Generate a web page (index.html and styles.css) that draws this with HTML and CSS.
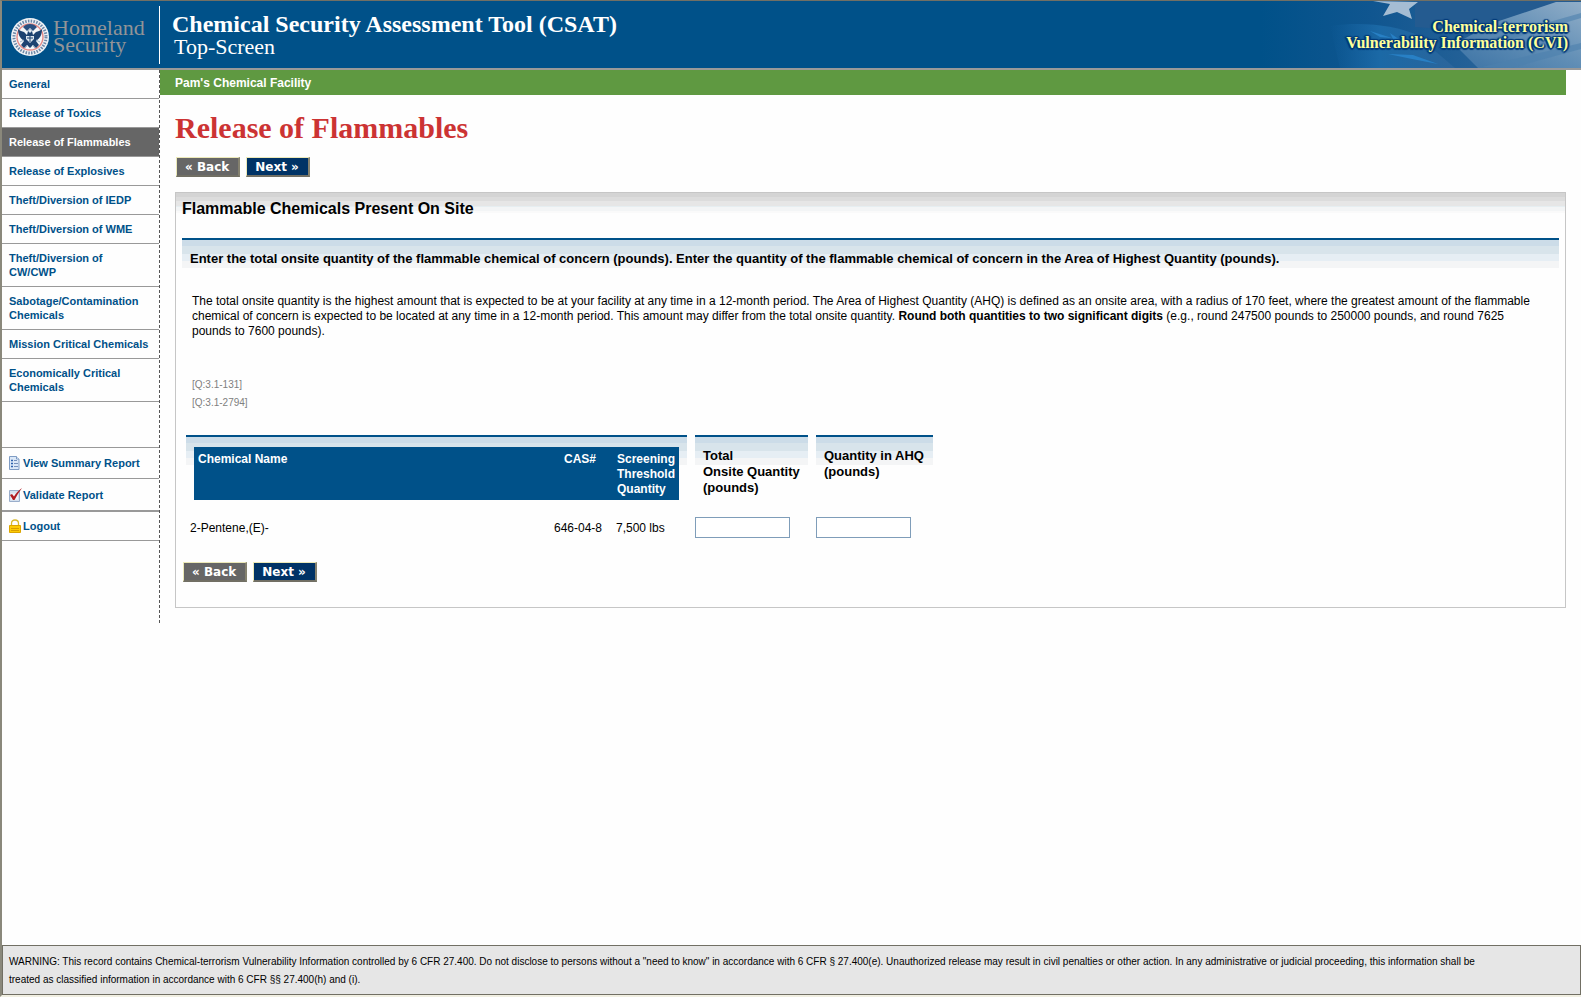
FILE: index.html
```html
<!DOCTYPE html>
<html lang="en">
<head>
<meta charset="utf-8">
<title>CSAT Top-Screen - Release of Flammables</title>
<link rel="stylesheet" href="styles.css">
</head>
<body>
<header class="banner">
  <div class="brand">
    <svg class="seal" viewBox="0 0 38 38" aria-hidden="true">
      <circle cx="19" cy="19" r="19" fill="#eef1f5"/>
      <circle cx="19" cy="19" r="16" fill="none" stroke="#6d88a8" stroke-width="3" stroke-dasharray="1.5 1.3"/>
      <circle cx="19" cy="19" r="13" fill="#f4f6f8" stroke="#e58a86" stroke-width="1.4"/>
      <path d="M7 11c2 2 4 2 6 3l3 3 1-4 2-2 2 2 1 4 3-3c2-1 4-1 6-3 0 6-2 9-6 12l3 4-3 3-3-3-3 3-3-3-3 3-3-3 3-4c-4-3-6-6-6-12z" fill="#1d4270"/>
      <path d="M12 9c2-2 4-3 7-3s5 1 7 3l-4 4-3-3-3 3z" fill="#2a5080"/>
      <path d="M19 11l-2 2 2 2 2-2zM15 18h8v3l-4 4-4-4z" fill="#dfe7ef"/>
      <path d="M16 20h6M19 18v6" stroke="#1d4270" stroke-width="1"/>
      <path d="M9 24l4-2M29 24l-4-2M14 30l3-3M24 30l-3-3" stroke="#9fb6cc" stroke-width="1"/>
    </svg>
    <div class="brand-name">Homeland<br>Security</div>
  </div>
  <div class="app-title">
    <div class="app-name">Chemical Security Assessment Tool (CSAT)</div>
    <div class="app-module">Top-Screen</div>
  </div>
  <div class="cvi">
    <svg class="flag" viewBox="0 0 321 67" preserveAspectRatio="none" aria-hidden="true">
      <defs>
        <linearGradient id="base" x1="0" x2="1"><stop offset="0" stop-color="#005189"/><stop offset=".35" stop-color="#105690"/><stop offset="1" stop-color="#3a6d9f"/></linearGradient>
        <linearGradient id="fold" x1="0" x2="1"><stop offset="0" stop-color="#1565a5" stop-opacity="0"/><stop offset=".4" stop-color="#1b69a6"/><stop offset="1" stop-color="#2b659b"/></linearGradient>
        <linearGradient id="light" x1="0" x2="1" y1="1" y2="0"><stop offset="0" stop-color="#3c73a5"/><stop offset=".5" stop-color="#5f8db5"/><stop offset="1" stop-color="#91aec8"/></linearGradient>
      </defs>
      <rect width="321" height="67" fill="url(#base)"/>
      <path d="M70 25c35-5 65 0 85 8l40 34H80z" fill="url(#fold)"/>
      <path d="M155 0h166v3l-80 30-86-7z" fill="#245b90"/>
      <path d="M218 67l-24-24 42-22 60-20h25v66z" fill="url(#light)"/>
      <path d="M215 42l106-30v5l-104 31zM222 66l99-24v6l-70 19z" fill="#4d80ae" opacity=".6"/>
      <path d="M113 0l17 3-7 12 14-4 15 7-3-10 9-7z" fill="#a5bdd3"/>
      <path d="M128 53l25 1 25 9-26-5zM110 30l22 7-12-1zM130 32l20 14-16-6z" fill="#2880c5"/>
    </svg>
    <div class="cvi-text"><span>Chemical-terrorism</span><span>Vulnerability Information (CVI)</span></div>
  </div>
</header>

<div class="layout">
  <nav class="sidebar">
    <ul class="menu">
      <li><a href="#">General</a></li>
      <li><a href="#">Release of Toxics</a></li>
      <li><a href="#" class="current">Release of Flammables</a></li>
      <li><a href="#">Release of Explosives</a></li>
      <li><a href="#">Theft/Diversion of IEDP</a></li>
      <li><a href="#">Theft/Diversion of WME</a></li>
      <li><a href="#">Theft/Diversion of<br>CW/CWP</a></li>
      <li><a href="#">Sabotage/Contamination Chemicals</a></li>
      <li><a href="#">Mission Critical Chemicals</a></li>
      <li><a href="#">Economically Critical Chemicals</a></li>
    </ul>
    <ul class="menu tools">
      <li><a href="#"><svg class="icon" viewBox="0 0 13 14" aria-hidden="true"><path d="M.5 .5h7l2.500 2.500v10.500H.5z" fill="#dbe8f8" stroke="#7f9cc4"/><path d="M7.500 .5V3H10" fill="#fff" stroke="#7f9cc4"/><path d="M2 4.500h2M2 7.500h2M2 10.500h2" stroke="#2e62ad" stroke-width="1.500"/><path d="M5 4.500h3M5 7.500h4M5 10.500h4" stroke="#7590bb"/></svg>View Summary Report</a></li>
      <li class="double"><a href="#"><svg class="icon" viewBox="0 0 13 14" aria-hidden="true"><path d="M.5 2.500h10v11H.5z" fill="#d5e0ee" stroke="#9aaecb"/><path d="M2 5.500h7v6H2z" fill="#f1f5fa"/><path d="M1 7l2-1 2 2.500C7 5 10 2 13 0 10 4 7.500 8 5.500 12H4z" fill="#b01c22"/></svg>Validate Report</a></li>
      <li><a href="#"><svg class="icon" viewBox="0 0 13 14" aria-hidden="true"><path d="M2.500 7V4.500C2.500 2 4 1 6 1s3.500 1 3.500 3.500V7" fill="none" stroke="#d9b92c" stroke-width="1.300"/><path d="M.5 6.500h11v7H.5z" fill="#fccb05" stroke="#dba500"/><path d="M2 9.500h8M2 11.500h8" stroke="#d99d00"/></svg>Logout</a></li>
    </ul>
  </nav>

  <main class="main">
    <div class="facility">Pam's Chemical Facility</div>
    <div class="content">
      <h1>Release of Flammables</h1>
      <div class="actions">
        <button type="button" class="btn back">« Back</button>
        <button type="button" class="btn next">Next »</button>
      </div>
      <section class="panel">
        <h2>Flammable Chemicals Present On Site</h2>
        <h3 class="question">Enter the total onsite quantity of the flammable chemical of concern (pounds). Enter the quantity of the flammable chemical of concern in the Area of Highest Quantity (pounds).</h3>
        <p class="help">The total onsite quantity is the highest amount that is expected to be at your facility at any time in a 12-month period. The Area of Highest Quantity (AHQ) is defined as an onsite area, with a radius of 170 feet, where the greatest amount of the flammable chemical of concern is expected to be located at any time in a 12-month period. This amount may differ from the total onsite quantity. <strong>Round both quantities to two significant digits</strong> (e.g., round 247500 pounds to 250000 pounds, and round 7625 pounds to 7600 pounds).</p>
        <p class="refs">[Q:3.1-131]<br>[Q:3.1-2794]</p>
        <table class="chemicals">
          <colgroup><col class="c-name"><col class="c-cas"><col class="c-stq"><col class="c-total"><col class="c-ahq"></colgroup>
          <thead>
            <tr>
              <th scope="col"><div class="cap first"><div class="blue">Chemical Name</div></div></th>
              <th scope="col"><div class="cap"><div class="blue">CAS#</div></div></th>
              <th scope="col"><div class="cap last"><div class="blue">Screening Threshold Quantity</div></div></th>
              <th scope="col"><div class="cap own" id="h-total">Total<br>Onsite Quantity<br>(pounds)</div></th>
              <th scope="col"><div class="cap own" id="h-ahq">Quantity in AHQ<br>(pounds)</div></th>
            </tr>
          </thead>
          <tbody>
            <tr>
              <td>2-Pentene,(E)-</td>
              <td>646-04-8</td>
              <td>7,500 lbs</td>
              <td class="entry"><input type="text" aria-labelledby="h-total"></td>
              <td class="entry"><input type="text" aria-labelledby="h-ahq"></td>
            </tr>
          </tbody>
        </table>
        <div class="actions">
          <button type="button" class="btn back">« Back</button>
          <button type="button" class="btn next">Next »</button>
        </div>
      </section>
    </div>
  </main>
</div>

<footer class="warning">WARNING: This record contains Chemical-terrorism Vulnerability Information controlled by 6 CFR 27.400. Do not disclose to persons without a "need to know" in accordance with 6 CFR § 27.400(e). Unauthorized release may result in civil penalties or other action. In any administrative or judicial proceeding, this information shall be treated as classified information in accordance with 6 CFR §§ 27.400(h) and (i).</footer>
</body>
</html>
```
FILE: styles.css
```css
* { box-sizing: border-box; }

body {
  margin: 0;
  min-height: 100vh;
  display: flex;
  flex-direction: column;
  background: #fefefe;
  border-top: 1px solid #716f64;
  border-left: 2px solid #8a887b;
  border-bottom: 2px solid #f1efe2;
  color: #000;
  font: 12px/15px "Liberation Sans", Arial, sans-serif;
}

/* Banner */
.banner {
  display: flex;
  height: 69px;
  background: #005189;
  border-bottom: 2px solid #999;
  font-family: "Liberation Serif", Georgia, serif;
  color: #fff;
}
.brand {
  display: flex;
  gap: 4px;
  width: 158px;
  margin: 5px 0 4px;
  padding: 11px 0 0 9px;
  border-right: 1px solid #fff;
}
.seal { width: 38px; height: 38px; margin-top: 1px; }
.brand-name { color: #929497; font-size: 22px; line-height: 17px; padding-top: 2px; }
.app-title { padding: 12px 0 0 12px; white-space: nowrap; }
.app-name { font-size: 24px; line-height: 23px; font-weight: bold; }
.app-module { font-size: 22px; line-height: 21px; padding-left: 2px; }
.cvi { position: relative; width: 321px; margin-left: auto; }
.flag { position: absolute; inset: 0; width: 100%; height: 100%; }
.cvi-text {
  position: relative;
  display: flex;
  flex-direction: column;
  align-items: flex-end;
  padding: 18px 13px 0 0;
  color: #ffff99;
  font-size: 16px;
  line-height: 16px;
  font-weight: bold;
  white-space: nowrap;
  text-shadow: -1px -1px 1px #003a7a, 1px -1px 1px #003a7a, -1px 1px 1px #003a7a, 1px 1px 1px #003a7a, 0 2px 1px #003a7a, 2px 0 1px #003a7a, -2px 0 1px #003a7a;
}

/* Page columns */
.layout { display: flex; flex: 1; align-items: flex-start; }
.sidebar { width: 158px; flex: none; border-right: 1px dashed #555; padding-bottom: 82px; }
.menu { list-style: none; margin: 0; padding: 0; }
.menu li { border-bottom: 1px solid #999; }
.menu a {
  display: block;
  padding: 7px 0 7px 7px;
  color: #005189;
  font-size: 11px;
  line-height: 14px;
  font-weight: bold;
  text-decoration: none;
}
.menu a.current { background: #666; color: #fff; }
.tools { margin-top: 45px; border-top: 1px solid #999; }
.tools a { display: flex; align-items: center; gap: 1px; padding: 8px 0 8px 7px; }
.tools .double { border-bottom-width: 2px; }
.tools .double a { padding-top: 9px; }
.tools li:last-child a { padding-top: 7px; padding-bottom: 7px; }
.icon { width: 13px; height: 14px; flex: none; }

.main { flex: 1; min-width: 0; padding-right: 15px; }
.facility {
  background: #5f9941;
  color: #fff;
  font-weight: bold;
  line-height: 15px;
  padding: 6px 15px 4px;
}
.content { padding-left: 15px; }
h1 {
  margin: 18px 0 13px;
  color: #cc3333;
  font: bold 30px/30px "Liberation Serif", Georgia, serif;
}
.actions { display: flex; gap: 6px; padding: 1px; }
.btn {
  height: 20px;
  padding: 1px 9px 0 8px;
  border: solid;
  border-width: 1px 2px 2px 1px;
  border-color: #ece9b8 #84816f #716f64 #ece9b8;
  border-radius: 0;
  color: #fff;
  font: bold 12px/14px "DejaVu Sans", Verdana, sans-serif;
}
.back { background: #666; }
.next { background: #003366; }

/* Question panel */
.panel {
  margin-top: 14px;
  padding: 0 6px 24px;
  border: 1px solid #c6c6c6;
  background: linear-gradient(#d4d4d4 0 4px, #dcdcdc 4px 8px, #e6e6e6 8px 13px, #e6eef1 13px 14px, #f3f5f6 14px 18px, #fafafa 18px 20px, transparent 20px);
}
h2 { margin: 0; padding: 6px 0 20px; font-size: 16px; line-height: 19px; }
.question {
  margin: 0;
  padding: 11px 8px 1px;
  border-top: 2px solid #005189;
  background: linear-gradient(#ccdce8 0 6px, #d8e4eb 6px 14px, #e6eef4 14px 21px, #f4f5f6 21px);
  font-size: 13px;
  line-height: 16px;
}
.help { margin: 26px 0 0; padding: 0 20px 0 10px; }
.refs { margin: 37px 0 0; padding-left: 10px; color: #808080; font-size: 10px; line-height: 18px; }

.chemicals { margin: 23px 0 23px 4px; border-collapse: collapse; table-layout: fixed; width: 747px; }
.c-name { width: 364px; }
.c-cas { width: 62px; }
.c-stq { width: 75px; }
.c-total { width: 121px; }
.c-ahq { width: 125px; }
.chemicals th { padding: 0; text-align: left; vertical-align: top; }
.cap {
  height: 65px;
  padding-top: 10px;
  border-top: 2px solid #005189;
  background: linear-gradient(#ccdce8 0 6px, #d8e4eb 6px 14px, #e6eef4 14px 21px, #f4f5f6 21px 28px, transparent 28px);
}
.cap.first { padding-left: 8px; }
.cap.last { padding-right: 8px; }
.cap.own { margin-left: 8px; padding: 11px 0 0 8px; font-size: 13px; line-height: 16px; white-space: nowrap; }
.blue { height: 53px; padding: 5px 4px 3px; background: #005189; color: #fff; }
.cap:not(.first) .blue { padding-left: 14px; }
.cap.last .blue { padding-left: 5px; }
.chemicals td { padding: 18px 0 0 4px; }
.chemicals .entry { padding: 17px 0 0 8px; }
.chemicals input {
  display: block;
  width: 95px;
  height: 21px;
  border: 1px solid #7f9db9;
  background: #fff;
  font: inherit;
}

/* Footer notice */
.warning {
  padding: 7px 72px 5px 6px;
  border: 1px solid #716f64;
  background: #e6e6e6;
  font-size: 10px;
  line-height: 18px;
}
```
